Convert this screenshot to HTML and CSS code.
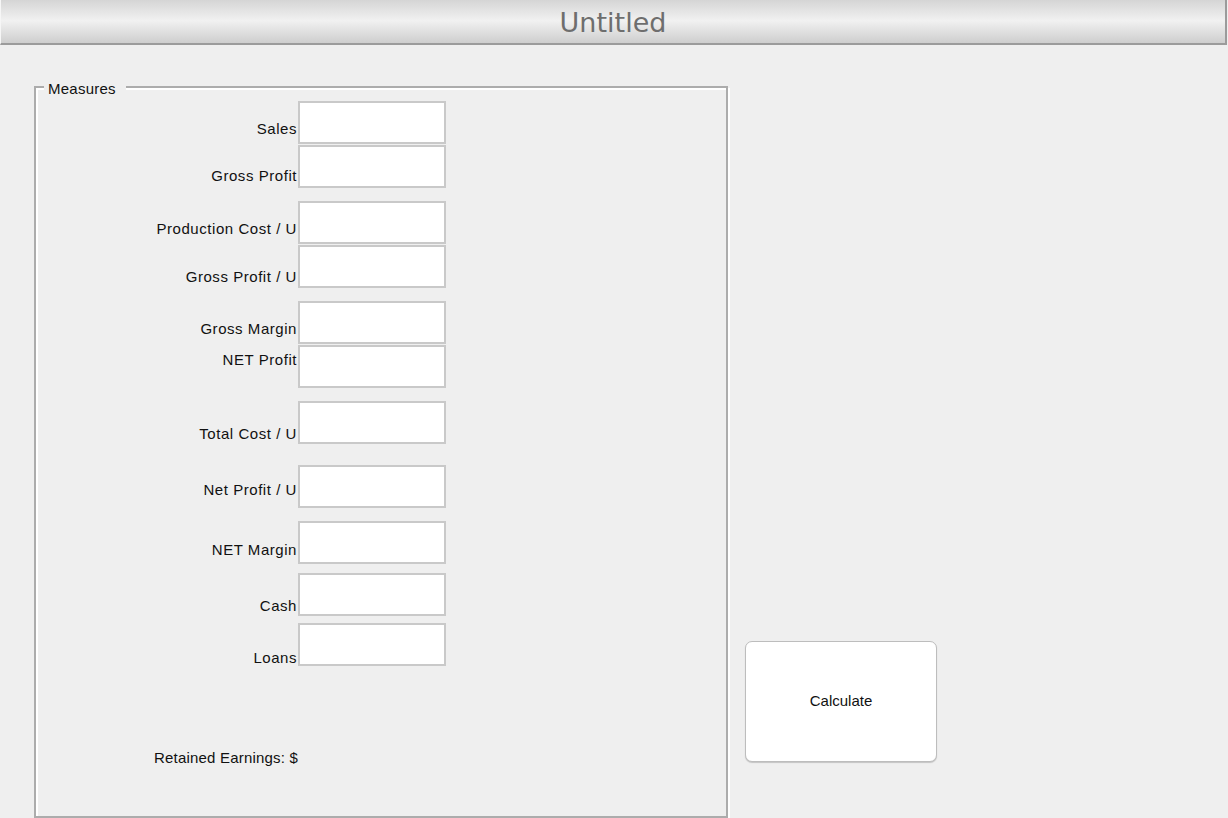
FILE: index.html
```html
<!DOCTYPE html>
<html lang="en">
<head>
<meta charset="utf-8">
<title>Untitled</title>
<link rel="stylesheet" href="styles.css">
</head>
<body>
<header class="titlebar">Untitled</header>
<main class="content">
  <section class="panel">
    <span class="legend">Measures</span>
    <div class="field">
      <label class="lbl drop-19">Sales</label><input class="box" type="text">
    </div>
    <div class="field gap-1">
      <label class="lbl drop-22">Gross Profit</label><input class="box" type="text">
    </div>
    <div class="field gap-13">
      <label class="lbl drop-19">Production Cost / U</label><input class="box" type="text">
    </div>
    <div class="field gap-1">
      <label class="lbl drop-23">Gross Profit / U</label><input class="box" type="text">
    </div>
    <div class="field gap-13">
      <label class="lbl drop-19">Gross Margin</label><input class="box" type="text">
    </div>
    <div class="field gap-1">
      <label class="lbl drop-6">NET Profit</label><input class="box" type="text">
    </div>
    <div class="field gap-13">
      <label class="lbl drop-24">Total Cost / U</label><input class="box" type="text">
    </div>
    <div class="field gap-21">
      <label class="lbl drop-16">Net Profit / U</label><input class="box" type="text">
    </div>
    <div class="field gap-13">
      <label class="lbl drop-20">NET Margin</label><input class="box" type="text">
    </div>
    <div class="field gap-9">
      <label class="lbl drop-24">Cash</label><input class="box" type="text">
    </div>
    <div class="field gap-7">
      <label class="lbl drop-26">Loans</label><input class="box" type="text">
    </div>
    <p class="retained">Retained Earnings: $</p>
  </section>
  <div class="actions">
    <button class="calc" type="button">Calculate</button>
  </div>
</main>
</body>
</html>
```

FILE: styles.css
```css
html, body {
  margin: 0;
  padding: 0;
}

body {
  width: 1228px;
  height: 818px;
  overflow: hidden;
  background: #efefef;
  font-family: "Liberation Sans", Arial, sans-serif;
  font-size: 15px;
  color: #111111;
}

.titlebar {
  box-sizing: border-box;
  width: 1227px;
  height: 45px;
  border-left: 1px solid #f6f6f6;
  border-right: 2px solid #9b9b9b;
  border-bottom: 2px solid #9b9b9b;
  background: linear-gradient(#d5d5d5 0%, #f1f1f1 48%, #cecece 100%);
  text-align: center;
  font-family: "DejaVu Sans", sans-serif;
  font-size: 27px;
  line-height: 45px;
  color: #6e6e6e;
}

.content {
  display: flex;
  align-items: flex-start;
  padding: 41px 0 0 34px;
}

.panel {
  position: relative;
  box-sizing: border-box;
  width: 694px;
  height: 732px;
  padding-top: 13px;
  border: 2px solid #acacac;
  box-shadow: inset 2px 2px 0 #ffffff, 2px 2px 0 #ffffff;
}

.legend {
  position: absolute;
  left: 8px;
  top: -8px;
  padding: 0 10px 0 4px;
  background: #efefef;
  line-height: 17px;
  letter-spacing: 0.25px;
}

.field {
  display: flex;
  align-items: flex-start;
  height: 43px;
}

.gap-1 { margin-top: 1px; }
.gap-7 { margin-top: 7px; }
.gap-9 { margin-top: 9px; }
.gap-13 { margin-top: 13px; }
.gap-21 { margin-top: 21px; }

.lbl {
  width: 261px;
  margin-right: 1px;
  text-align: right;
  line-height: 17px;
  letter-spacing: 0.55px;
  white-space: nowrap;
}

.drop-6 { padding-top: 6px; }
.drop-16 { padding-top: 16px; }
.drop-19 { padding-top: 19px; }
.drop-20 { padding-top: 20px; }
.drop-22 { padding-top: 22px; }
.drop-23 { padding-top: 23px; }
.drop-24 { padding-top: 24px; }
.drop-26 { padding-top: 26px; }

.box {
  box-sizing: border-box;
  width: 148px;
  height: 43px;
  margin: 0;
  padding: 0 4px;
  border: 2px solid #c9c9c9;
  border-radius: 0;
  background: #ffffff;
  font: inherit;
  outline: none;
}

.retained {
  margin: 83px 0 0 118px;
  line-height: 17px;
  letter-spacing: 0.2px;
}

.actions {
  margin-left: 17px;
  padding-top: 555px;
}

.calc {
  box-sizing: border-box;
  width: 192px;
  height: 121px;
  margin: 0;
  padding: 0 0 2px;
  border: 1px solid #bdbdbd;
  border-radius: 7px;
  background: #ffffff;
  box-shadow: 0 1px 1px rgba(0, 0, 0, 0.18);
  font-family: "Liberation Sans", Arial, sans-serif;
  font-size: 15px;
  color: #111111;
}
```
